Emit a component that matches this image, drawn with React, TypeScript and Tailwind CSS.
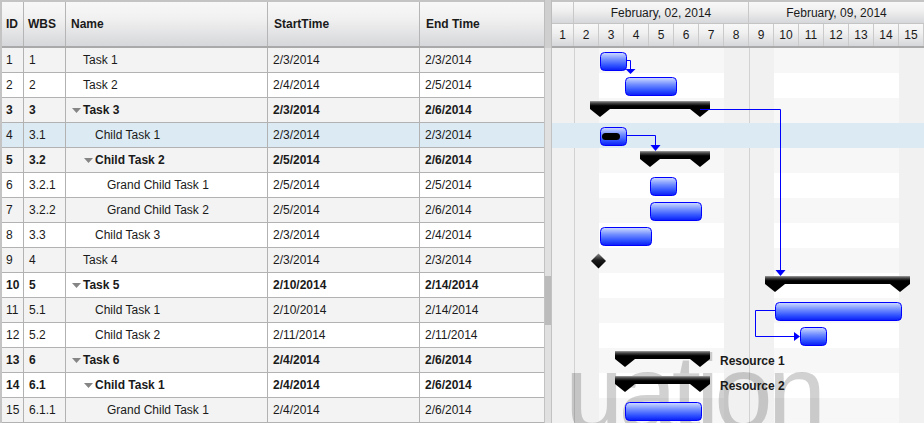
import React from "react";

type Row = {
  id: number;
  wbs: string;
  name: string;
  level: number;
  parent?: boolean;
  start: string;
  end: string;
};

const rows: Row[] = [
  { id: 1, wbs: "1", name: "Task 1", level: 0, start: "2/3/2014", end: "2/3/2014" },
  { id: 2, wbs: "2", name: "Task 2", level: 0, start: "2/4/2014", end: "2/5/2014" },
  { id: 3, wbs: "3", name: "Task 3", level: 0, parent: true, start: "2/3/2014", end: "2/6/2014" },
  { id: 4, wbs: "3.1", name: "Child Task 1", level: 1, start: "2/3/2014", end: "2/3/2014" },
  { id: 5, wbs: "3.2", name: "Child Task 2", level: 1, parent: true, start: "2/5/2014", end: "2/6/2014" },
  { id: 6, wbs: "3.2.1", name: "Grand Child Task 1", level: 2, start: "2/5/2014", end: "2/5/2014" },
  { id: 7, wbs: "3.2.2", name: "Grand Child Task 2", level: 2, start: "2/5/2014", end: "2/6/2014" },
  { id: 8, wbs: "3.3", name: "Child Task 3", level: 1, start: "2/3/2014", end: "2/4/2014" },
  { id: 9, wbs: "4", name: "Task 4", level: 0, start: "2/3/2014", end: "2/3/2014" },
  { id: 10, wbs: "5", name: "Task 5", level: 0, parent: true, start: "2/10/2014", end: "2/14/2014" },
  { id: 11, wbs: "5.1", name: "Child Task 1", level: 1, start: "2/10/2014", end: "2/14/2014" },
  { id: 12, wbs: "5.2", name: "Child Task 2", level: 1, start: "2/11/2014", end: "2/11/2014" },
  { id: 13, wbs: "6", name: "Task 6", level: 0, parent: true, start: "2/4/2014", end: "2/6/2014" },
  { id: 14, wbs: "6.1", name: "Child Task 1", level: 1, parent: true, start: "2/4/2014", end: "2/6/2014" },
  { id: 15, wbs: "6.1.1", name: "Grand Child Task 1", level: 2, start: "2/4/2014", end: "2/6/2014" },
];

const SELECTED = 4;
const MILESTONES = [9];
const RESOURCES: Record<number, string> = { 13: "Resource 1", 14: "Resource 2" };

const indent = ["pl-[6px]", "pl-[18px]", "pl-[30px]"];
const days = Array.from({ length: 15 }, (_, i) => i + 1);
const weekend = (d: number) => d === 1 || d === 2 || d === 8 || d === 9 || d === 15;

const dayOf = (s: string) => Number(s.split("/")[1]);
// left edge of Feb d inside the chart pane
const dayX = (d: number) => 25 * d - 28;
const rowTop = (id: number) => (id - 1) * 25;

const headerBg =
  "bg-[linear-gradient(to_bottom,#f8f8f8_0%,#f0f0f0_40%,#d6d7da_100%)]";

function Expander() {
  return (
    <svg width="9" height="5" viewBox="0 0 9 5" className="mt-[1px]">
      <polygon points="0,0 9,0 4.5,5" fill="#858585" />
    </svg>
  );
}

function Grid() {
  return (
    <div className="flex w-[544px] flex-col border-l-2 border-[#c4c4c4]">
      <div className={`flex h-[48px] border-y-2 border-t-[#c4c4c4] border-b-[#a9a9a9] font-bold ${headerBg}`}>
        <div className="flex w-[22px] items-center border-r border-[#b5b5b5] pl-[4px]">ID</div>
        <div className="flex w-[42px] items-center border-r border-[#b5b5b5] pl-[4px]">WBS</div>
        <div className="flex w-[202px] items-center border-r border-[#b5b5b5] pl-[5px]">Name</div>
        <div className="flex w-[152px] items-center border-r border-[#b5b5b5] pl-[6px]">StartTime</div>
        <div className="flex w-[124px] items-center pl-[6px]">End Time</div>
      </div>
      {rows.map((r, i) => (
        <div
          key={r.id}
          className={`flex h-[25px] border-b border-[#b2b2b2] ${r.parent ? "font-bold" : ""} ${
            r.id === SELECTED ? "bg-[#dcebf3]" : i % 2 === 0 ? "bg-[#f3f3f3]" : "bg-white"
          }`}
        >
          <div className="flex w-[22px] items-center border-r border-[#b2b2b2] pl-[4px]">{r.id}</div>
          <div className="flex w-[42px] items-center border-r border-[#b2b2b2] pl-[5px]">{r.wbs}</div>
          <div className={`flex w-[202px] items-center border-r border-[#b2b2b2] ${indent[r.level]}`}>
            <span className="flex w-[11px] items-center">{r.parent && <Expander />}</span>
            {r.name}
          </div>
          <div className="flex w-[152px] items-center border-r border-[#b2b2b2] pl-[5px]">{r.start}</div>
          <div className="flex w-[124px] items-center pl-[5px]">{r.end}</div>
        </div>
      ))}
    </div>
  );
}

function Scrollbar() {
  return (
    <div className="flex w-[8px] flex-col">
      <div className="h-[48px] border-x border-[#bdbdbd] bg-[#cfcfcf]" />
      <div className="flex-1 border-x border-[#c2c2c2] bg-[#e0e0e0]">
        <div className="mt-[228px] h-[49px] bg-[#bbbbbb]" />
      </div>
    </div>
  );
}

function ChartHeader() {
  return (
    <div className="flex h-[48px] flex-col border-y-2 border-t-[#c4c4c4] border-b-[#a9a9a9]">
      <div className={`flex h-[22px] border-b border-[#c4c4c4] ${headerBg}`}>
        <div className="w-[22px] border-r border-[#c8c8c8]" />
        <div className="flex w-[175px] items-center justify-center border-r border-[#c8c8c8]">
          February, 02, 2014
        </div>
        <div className="flex w-[175px] items-center justify-center">February, 09, 2014</div>
      </div>
      <div className={`flex flex-1 ${headerBg}`}>
        {days.map((d) => (
          <div
            key={d}
            className={`flex items-center justify-center border-r border-[#cacaca] ${
              d === 1 ? "w-[22px]" : "w-[25px]"
            }`}
          >
            {d}
          </div>
        ))}
      </div>
    </div>
  );
}

function TaskBar({ id, s, e }: { id: number; s: number; e: number }) {
  const t = rowTop(id);
  const x = dayX(s) + 1.5;
  const w = (e - s + 1) * 25 + 1;
  return (
    <g>
      <rect x={x} y={t + 4.5} width={w} height={18} rx={4} fill="url(#taskFill)" stroke="#0000ff" />
      {id === SELECTED && <rect x={50} y={t + 10} width={18} height={7} rx={3.5} fill="#000" />}
    </g>
  );
}

function Summary({ id, s, e }: { id: number; s: number; e: number }) {
  const t = rowTop(id);
  const a = dayX(s) + 1;
  const b = dayX(e + 1) + 1;
  const d = `M${a - 10},${t + 3} H${b + 10} V${t + 11} L${b},${t + 19} L${b - 10},${t + 11} H${a + 10} L${a},${t + 19} L${a - 10},${t + 11} Z`;
  return <path d={d} fill="url(#summaryFill)" />;
}

function Milestone({ id, s }: { id: number; s: number }) {
  const cx = dayX(s) - 0.5;
  const cy = rowTop(id) + 13;
  return (
    <polygon
      points={`${cx},${cy - 7.5} ${cx + 7.5},${cy} ${cx},${cy + 7.5} ${cx - 7.5},${cy}`}
      fill="url(#diamondFill)"
    />
  );
}

function Chart() {
  return (
    <div className="relative h-[375px] overflow-hidden">
      {rows.map((r, i) => (
        <div key={r.id} className={`h-[25px] ${i % 2 === 0 ? "bg-[#f7f7f7]" : "bg-white"}`} />
      ))}
      <div className="absolute inset-0 flex">
        {days.map((d) => (
          <div
            key={d}
            className={`${d === 1 ? "w-[22px]" : "w-[25px]"} ${weekend(d) ? "bg-[#f1f1f1]" : ""} ${
              d === 2 || d === 9 ? "border-l border-[#d2d2d2]" : ""
            }`}
          />
        ))}
      </div>
      <div className="absolute inset-x-0 top-[75px] h-[25px] bg-[#dcebf3]" />
      <svg className="absolute inset-0" width="372" height="375">
        <defs>
          <linearGradient id="taskFill" x1="0" y1="0" x2="0" y2="1">
            <stop offset="0" stopColor="#d2ddff" />
            <stop offset="0.4" stopColor="#6f8cff" />
            <stop offset="0.75" stopColor="#2a4dff" />
            <stop offset="1" stopColor="#0a1cf5" />
          </linearGradient>
          <linearGradient id="summaryFill" x1="0" y1="0" x2="0" y2="1">
            <stop offset="0" stopColor="#a0a0a0" />
            <stop offset="0.12" stopColor="#4a4a4a" />
            <stop offset="0.3" stopColor="#000" />
            <stop offset="1" stopColor="#000" />
          </linearGradient>
          <linearGradient id="diamondFill" x1="0" y1="0" x2="0" y2="1">
            <stop offset="0" stopColor="#8a8a8a" />
            <stop offset="0.45" stopColor="#1a1a1a" />
            <stop offset="1" stopColor="#000" />
          </linearGradient>
        </defs>

        <text
          x={13}
          y={381}
          fontSize={105}
          letterSpacing={-5}
          fontFamily="'Liberation Sans', Arial, sans-serif"
          fill="#000"
          fillOpacity={0.18}
        >
          uation
        </text>

        {rows.map((r) => {
          const s = dayOf(r.start);
          const e = dayOf(r.end);
          if (r.parent) return <Summary key={r.id} id={r.id} s={s} e={e} />;
          if (MILESTONES.includes(r.id)) return <Milestone key={r.id} id={r.id} s={s} />;
          return <TaskBar key={r.id} id={r.id} s={s} e={e} />;
        })}

        {/* dependency links */}
        <g stroke="#0000ff" strokeWidth={1} fill="none">
          <path d="M75,12.5 H78.5 V21" />
          <path d="M148,61.5 H228.5 V222" />
          <path d="M75,87.5 H103.5 V97" />
          <path d="M223,262.5 H203.5 V288.5 H243" />
        </g>
        <g fill="#0000ff">
          <polygon points="73.5,21 83.5,21 78.5,26" />
          <polygon points="223.5,222 233.5,222 228.5,228" />
          <polygon points="98.5,97 108.5,97 103.5,103" />
          <polygon points="242,284 242,293 248,288.5" />
        </g>

        {Object.entries(RESOURCES).map(([id, label]) => (
          <text
            key={id}
            x={168}
            y={rowTop(Number(id)) + 16.5}
            fontSize={12}
            fontWeight="bold"
            fontFamily="'Liberation Sans', Arial, sans-serif"
            fill="#1a1a1a"
          >
            {label}
          </text>
        ))}
      </svg>
    </div>
  );
}

export default function App() {
  return (
    <div className="flex h-[423px] w-[924px] overflow-hidden bg-white font-['Liberation_Sans',Arial,sans-serif] text-[12px] text-[#1a1a1a]">
      <Grid />
      <Scrollbar />
      <div className="flex w-[372px] flex-col">
        <ChartHeader />
        <Chart />
      </div>
    </div>
  );
}
